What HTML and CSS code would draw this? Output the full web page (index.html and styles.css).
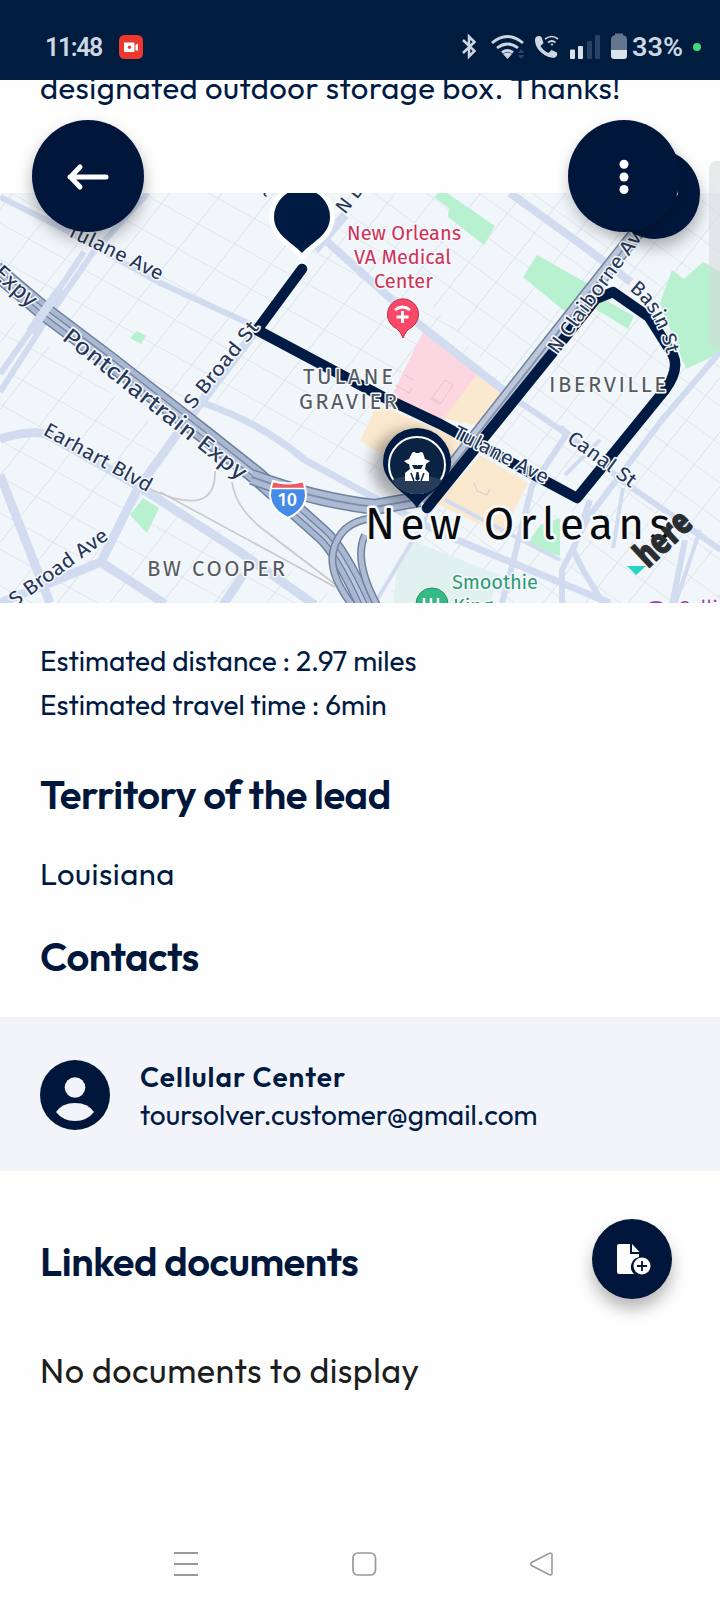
FILE: index.html
```html
<!DOCTYPE html>
<html lang="en">
<head>
<meta charset="utf-8">
<title>Lead details</title>
<link rel="stylesheet" href="styles.css">
</head>
<body>
<header class="status">
  <div class="status-left">
    <span class="clock">11:48</span>
    <svg class="rec" width="24" height="24" viewBox="0 0 24 24"><rect width="24" height="24" rx="5.5" fill="#ec382e"/><path d="M5 7.500h9.500q1 0 1 1V17H6q-1 0-1-1zM16.500 10l2.500-1.500v7.500l-2.500-1z" fill="#fff"/><circle cx="10.500" cy="12.300" r="1.700" fill="#ec382e"/></svg>
  </div>
  <svg class="status-icons" width="255" height="32" viewBox="460 30 255 32">
    <g fill="none" stroke="#cdd6e1" stroke-width="2.500">
      <path d="M463 40l11.500 11-5.500 5.500v-20l5.500 5.500L463 53"/>
      <path d="M492 43q15-13 31 0M497 48q10.500-8 21 0M502 52.500q5.500-4 11 0" stroke-width="2.800"/>
      <path d="M545 39q7-5 13 0M548 42.500q4-3 7.500 0" stroke-width="1.700"/>
    </g>
    <path d="M503 54q4.500-3 9 0l-4.500 5zM550.500 44q1.500-1 3 0l-1.500 2z" fill="#cdd6e1"/>
    <path d="M536 37q3-2 5.500 0l2 6-3 3q3 5 8 7l3-3 5.500 2.500q1 3-2 5-5 1-10.500-2.500-9-6-9.500-14-.2-3 1-4z" fill="#cdd6e1"/>
    <path d="M518 53l3-4 3.500 4zM518 55l3 4 3.500-4z" fill="#29436a"/>
    <g fill="#d6dee7"><rect x="570" y="49.500" width="5" height="9.500" rx="1"/><rect x="578" y="46" width="5" height="13" rx="1"/></g>
    <g fill="#284265"><rect x="587" y="41" width="5" height="18" rx="1"/><rect x="595" y="35" width="5" height="24" rx="1"/></g>
    <path d="M611 39q0-3 4-4v-1.500h8V35q4 1 4 4v12h-16z" fill="#64768e"/><path d="M611 50h16v6q0 3-3 3h-10q-3 0-3-3z" fill="#dae2ea"/>
    <text x="632" y="56" textLength="51" lengthAdjust="spacingAndGlyphs" class="battery">33%</text>
    <circle cx="697" cy="47" r="4" fill="#3ddc78"/>
  </svg>
</header>
<main>
  <section class="note"><p>designated outdoor storage box. Thanks!</p></section>
  <svg class="map" width="720" height="410" viewBox="0 193 720 410">
    <defs>
      <pattern id="gridA" width="42" height="32" patternUnits="userSpaceOnUse" patternTransform="matrix(.87 .48 -.62 .79 12 193)"><path d="M0 0H42M0 0V32" fill="none" stroke="#d3d8e2" stroke-width="1.200"/></pattern>
      <pattern id="gridB" width="34" height="31" patternUnits="userSpaceOnUse" patternTransform="matrix(.8 .58 -.62 .79 480 193)"><path d="M0 0H34M0 0V31" fill="none" stroke="#d3d9e3" stroke-width="1.200"/></pattern>
      <path id="basin" d="M629 290Q656 309 667 356"/>
      <filter id="soft" x="-50%" y="-50%" width="200%" height="200%"><feGaussianBlur stdDeviation="7"/></filter>
    </defs>
    <rect y="193" width="720" height="410" fill="#f1f6fa"/>
    <path d="M0 193H330L514 395 430 480 340 470 215 400 180 420 0 270z" fill="url(#gridA)"/>
    <path d="M0 310L160 430 148 488 345 603H0z" fill="url(#gridA)"/>
    <path d="M330 193H720V603H385L430 510 514 395z" fill="url(#gridB)"/>
    <g fill="#b8f1d0">
      <path d="M439 193h8l48 33-11 19-36-28 1-9-14-10z"/>
      <path d="M537 255l55 31-18 33-51-42zM603 299l31 17-6 13-32-20zM672 270l12 9 19-17 17 9v82l-34 16-26-66z"/>
      <path d="M137 331l9 5-5 8-11-6zM143 498l16 10-12 25-17-18zM540 525l20-7v38l-33-11z"/>
    </g>
    <path d="M410 540l90 35-10 28h-97l4-35z" fill="#e0f1ef"/>
    <path d="M424 330l56 41-39 54-49-30z" fill="#fcd7e1"/>
    <g fill="#fbe9cf"><path d="M480 370l31 23-26 34-41-8zM377 404l85 36-28 46-74-45zM480 455l48 28-26 52-65-31z"/></g>
    <path d="M395 385l14 8 3-5M405 375l8 5M445 380l8 5-12 18-9-5zM430 398l10 7M474 483l3 8 10 4 3-6" fill="none" stroke="#e5c3cb"/>
    <g fill="none" stroke="#d2dcf0" stroke-width="9" stroke-linejoin="round">
      <path d="M0 197L60 227 160 283 257 327" stroke-width="6"/>
      <path d="M0 392L45 322 92 254 148 193M0 374L45 310 84 252" stroke-width="6"/>
      <path d="M257 329L180 430 137 490 101 562 0 603M345 215L315 250"/>
      <path d="M0 439Q35 428 50 436L135 484 240 552 315 605M0 475L50 603M101 562l64 42M243 575l-20 30"/>
      <path d="M200 402Q260 422 305 460L360 490 440 533 530 570 610 603" stroke-width="7"/>
      <path d="M322 237L420 325 512 397M510 193l76 55 45 34" stroke-width="8"/>
      <path d="M720 352L662 420 590 515M512 397l55 37-35 52-20 80-10 37M560 427l61 53 100 70M592 510l-30 60v35M590 500l-17 50 10 20 20 33M685 540l-13 65" stroke-width="6"/>
      <path d="M435 503l-60 100M445 500l115 60M600 440l-35 35M623 488l-10 60M700 530l-25 75" stroke-width="4"/>
    </g>
    <g fill="none" stroke="#cbc9cb" stroke-width="1.700"><path d="M148 488q68 32 67-17M160 492l175 95M232 482q4 27 32 48l76 58"/></g>
    <g fill="none" stroke-linejoin="round">
      <path d="M-5 270L45 312 110 361 205 435 258 477 322 534Q340 550 365 605" stroke="#6d7d9c" stroke-width="19"/>
      <path d="M-5 270L45 312 110 361 205 435 258 477 322 534Q340 550 365 605" stroke="#a9b8d2" stroke-width="16"/>
      <path d="M-5 270L45 312 110 361 205 435 258 477 322 534Q340 550 365 605" stroke="#71819f" stroke-width="6"/>
      <path d="M-5 270L45 312 110 361 205 435 258 477 322 534Q340 550 365 605" stroke="#bac7dc" stroke-width="3.500"/>
      <path d="M252 477Q315 500 375 507L420 499" stroke="#71819f" stroke-width="16"/>
      <path d="M252 477Q315 500 375 507L420 499" stroke="#acbad3" stroke-width="13"/>
      <path d="M252 477Q315 500 375 507L420 499" stroke="#7d8ca8" stroke-width="2"/>
      <path d="M380 518Q345 518 335 545 325 570 353 606M365 535q-12 25 12 70" stroke="#71819f" stroke-width="8"/>
      <path d="M380 518Q345 518 335 545 325 570 353 606M365 535q-12 25 12 70" stroke="#aebcd3" stroke-width="5"/>
      <path d="M424 503L544 350 645 222" stroke="#71819f" stroke-width="15"/>
      <path d="M424 503L544 350 645 222" stroke="#bdc7da" stroke-width="12"/>
      <path d="M424 503L544 350 645 222" stroke="#8492ae" stroke-width="2"/>
      <path d="M30 332L60 289" stroke="#d2dcf0" stroke-width="9"/>
    </g>
    <path d="M302 269L257 330 383 397 440 424 577 498 664 391Q680 370 673 355L649 317 613 292 596 299 427 508" fill="none" stroke="#001b43" stroke-width="10.500" stroke-linejoin="round" stroke-linecap="round"/>
    <g class="road">
      <text transform="translate(66 235) rotate(26)" textLength="104" lengthAdjust="spacingAndGlyphs">Tulane Ave</text>
      <text class="hwy" transform="translate(-8 275) rotate(42)" textLength="50" lengthAdjust="spacingAndGlyphs">Expy</text>
      <text class="hwy" transform="translate(61 339) rotate(38.500)" textLength="228" lengthAdjust="spacingAndGlyphs">Pontchartrain Expy</text>
      <text transform="translate(193 410) rotate(-51)" textLength="106" lengthAdjust="spacingAndGlyphs">S Broad St</text>
      <text transform="translate(42 434) rotate(29)" textLength="121" lengthAdjust="spacingAndGlyphs">Earhart Blvd</text>
      <text transform="translate(15 607) rotate(-36)" textLength="117" lengthAdjust="spacingAndGlyphs">S Broad Ave</text>
      <text transform="translate(557 355) rotate(-54)" textLength="157" lengthAdjust="spacingAndGlyphs">N Claiborne Ave</text>
      <text><textPath href="#basin" textLength="76" lengthAdjust="spacingAndGlyphs">Basin St</textPath></text>
      <text transform="translate(566 441) rotate(36)" textLength="80" lengthAdjust="spacingAndGlyphs">Canal St</text>
      <text transform="translate(452 437) rotate(27)" textLength="104" lengthAdjust="spacingAndGlyphs">Tulane Ave</text>
      <text transform="translate(345 215) rotate(-52)">N Broad</text>
      <text transform="translate(254 184) rotate(48)">St</text>
    </g>
    <g class="area">
      <text x="303" y="384" textLength="90">TULANE</text><text x="299" y="409" textLength="98">GRAVIER</text>
      <text x="549" y="392" textLength="117">IBERVILLE</text><text x="147" y="576" textLength="138">BW COOPER</text>
    </g>
    <g class="poi" fill="#cf3158">
      <text x="347" y="240" textLength="114">New Orleans</text><text x="354" y="264" textLength="97">VA Medical</text><text x="374" y="288" textLength="59">Center</text>
    </g>
    <path d="M403 338q-3-8-9-11a15.500 15.500 0 1 1 18 0q-6 3-9 11z" fill="#fb4868" stroke="#bc2e4e"/>
    <path d="M402.500 311v12M396.500 317h12M395 310q7.500-6 15 0" stroke="#fff" stroke-width="2.800" fill="none"/>
    <g class="poi" fill="#2d9b76"><text x="452" y="589" textLength="86">Smoothie</text><text x="453" y="613">King</text></g>
    <circle cx="432" cy="604" r="16" fill="#35b985" stroke="#238d68"/><path d="M424 598v7M431 598v7M438 598v7" stroke="#fff" stroke-width="2.500"/>
    <circle cx="656" cy="615" r="14" fill="#9b46b0"/><text class="poi" x="678" y="615" fill="#9b46b0">Collins</text>
    <path d="M272 481q16 5 32 0l1 9h-34z" fill="#ed5b61"/><path d="M271 489h34q2 20-17 28-19-8-17-28z" fill="#468be8"/>
    <path d="M273 481q15 5 30 0 3 7 3 15-1 14-18 22-17-8-18-22 0-8 3-15z" fill="none" stroke="#fff" stroke-width="2"/>
    <path d="M271 488.500h34" stroke="#fff" stroke-width="1.500"/><text x="278" y="506" textLength="19" class="shield">10</text>
    <path d="M302 253C292 242 274 235 274 217a28 28 0 0 1 56 0c0 18-18 25-28 36z" fill="#001b43" stroke="#fff" stroke-width="10" paint-order="stroke"/>
    <ellipse cx="410" cy="466" rx="38" ry="36" fill="#000" opacity=".32" filter="url(#soft)"/>
    <path d="M417 508C408 493 383 484 383 462a34 34 0 0 1 68 0c0 22-25 31-34 46z" fill="#001b43"/>
    <circle cx="417" cy="465" r="28" fill="#0a2342" stroke="#fff" stroke-width="2"/>
    <path d="M392 480q25-10 50 0a29 29 0 0 1-50 0" fill="#263c59"/>
    <path d="M412 453q2-2 4 0h3q2-2 4 0l2 6 5 2-4 3h-18l-4-3 5-2zM409 464h17l-1 5 4 4v8h-24v-8l5-4z" fill="#fff"/><path d="M412 465h5l.5 1 .5-1h5l-2 4h-7z" fill="#0a2342"/><path d="M411 473l3 8M424 473l-3 8" stroke="#0a2342" stroke-width="1.500"/><path d="M416.500 472h2l1.200 7-2.200 2-2.200-2z" fill="#0a2342"/>
    <text class="city" x="365" y="539" textLength="305">New Orleans</text>
    <text class="here" transform="translate(648 569) rotate(-43)" textLength="64" lengthAdjust="spacingAndGlyphs">here</text>
    <path d="M627 566h19l-10 9z" fill="#2ad1c6"/>
  </svg>
  <section class="details">
    <p class="estimate">Estimated distance : 2.97 miles</p>
    <p class="estimate">Estimated travel time : 6min</p>
    <h2 class="h-territory">Territory of the lead</h2>
    <p class="territory">Louisiana</p>
    <h2 class="h-contacts">Contacts</h2>
  </section>
  <section class="contact">
    <svg width="70" height="70" viewBox="0 0 70 70"><circle cx="35" cy="35" r="35" fill="#00173b"/><circle cx="35" cy="27.500" r="10.300" fill="#f3f4fa"/><path d="M16 52q6-9 19-9t19 9q-7 9-19 9t-19-9z" fill="#f3f4fa"/></svg>
    <div><p class="name">Cellular Center</p><p class="email">toursolver.customer@gmail.com</p></div>
  </section>
  <section class="documents">
    <div class="doc-head"><h2 class="h-docs">Linked documents</h2>
      <button class="add" aria-label="Add document"><svg width="40" height="40" viewBox="0 0 40 40"><path d="M7 5h11v10h9v3a10 10 0 0 0-5 17H7q-2 0-2-2V7q0-2 2-2zM20 5l7.500 8H20z" fill="#fff"/><circle cx="30" cy="27" r="8.500" fill="#fff"/><path d="M30 22v10M25 27h10" stroke="#00173b" stroke-width="1.800"/></svg></button>
    </div>
    <p class="empty">No documents to display</p>
  </section>
</main>
<button class="fab edit" aria-label="Edit"><svg width="6" height="10" viewBox="0 0 6 10"><path d="M1 7L4 1v5z" fill="#ccd6e4"/></svg></button>
<button class="fab back" aria-label="Back"><svg width="44" height="32" viewBox="0 0 44 32"><path d="M40 17H4M14 7L4.500 17 14 27" fill="none" stroke="#fff" stroke-width="5" stroke-linecap="round" stroke-linejoin="round"/></svg></button>
<button class="fab more" aria-label="More"><svg width="12" height="38" viewBox="0 0 12 38"><g fill="#fff"><circle cx="6" cy="7.300" r="4.500"/><circle cx="6" cy="20" r="4.500"/><circle cx="6" cy="32.500" r="4.500"/></g></svg></button>
<div class="scrollbar"></div>
<nav class="nav">
  <svg width="24" height="26" viewBox="0 0 24 26"><path d="M0 2h24M0 13h24M0 24h24" stroke="#999" stroke-width="1.800"/></svg>
  <svg width="26" height="26" viewBox="0 0 26 26"><rect x="2" y="2" width="22.500" height="22" rx="5" fill="none" stroke="#999" stroke-width="1.700"/></svg>
  <svg width="26" height="26" viewBox="0 0 26 26"><path d="M2.500 11.500L20.500 2.300q2.500-.5 2.500 1.500v18.500q0 2-2.500 1.500L2.500 14.500q-1.500-1.500 0-3z" fill="none" stroke="#999" stroke-width="1.600"/></svg>
</nav>
</body>
</html>
```
FILE: styles.css
```css
* { box-sizing: border-box; }
body { margin: 0; width: 720px; height: 1608px; overflow: hidden; position: relative; display: flex; flex-direction: column; background: #fefefe; color: #001b43; font-family: Outfit, Lato, "Liberation Sans", sans-serif; }
p, h2 { margin: 0; white-space: nowrap; }
svg { display: block; flex: none; }
button { border: 0; padding: 0; display: flex; align-items: center; justify-content: center; background: #00173b; border-radius: 50%; }
.status { height: 80px; flex: none; background: #001d40; display: flex; justify-content: space-between; padding: 30px 5px 0 45px; position: relative; z-index: 1; }
.status-left { display: flex; height: 34px; align-items: center; gap: 17px; }
.clock { width: 57px; color: #cdd6e1; font: 600 25px Roboto, sans-serif; letter-spacing: -1.4px; }
.battery { fill: #cdd6e1; font: 600 25px Roboto, sans-serif; }
main { flex: 1; }
.note { height: 113px; padding-left: 40px; }
.note p { font-size: 31px; line-height: 40px; position: relative; top: -12px; letter-spacing: .47px; }
.map { overflow: hidden; }
.map text { font-family: "Fira Sans", "Noto Sans", sans-serif; stroke: #f5f9fc; stroke-width: 3px; paint-order: stroke; stroke-linejoin: round; }
.road text { font-size: 20px; fill: #273658; }
.map .road .hwy { font-size: 23px; }
.area text { font-size: 22px; fill: #555960; }
.map text.poi, .poi text { font-size: 20px; }
.map .shield { font-size: 18px; fill: #fff; stroke: none; font-weight: 500; }
.map .city { font-size: 44px; fill: #080b0e; stroke-width: 5px; }
.map .here { font: 800 36px "Open Sans", sans-serif; fill: #292c31; stroke: #292c31; stroke-width: 1px; }
.details { padding: 36px 40px 0; height: 414px; }
.estimate { font-size: 28px; line-height: 44px; }
h2 { font-size: 40px; line-height: 50px; font-weight: 600; letter-spacing: -.5px; color: #00173b; }
.h-territory { margin-top: 42px; }
.territory { font-size: 31px; line-height: 40px; margin-top: 35px; letter-spacing: .5px; }
.h-contacts { margin-top: 37px; }
.contact { height: 154px; background: #f3f4fa; display: flex; align-items: center; padding: 2px 40px 0; gap: 30px; }
.name, .email { font-size: 28px; line-height: 38px; position: relative; top: 1px; }
.name { font-weight: 600; letter-spacing: 1px; }
.documents { padding: 48px 48px 0 40px; }
.doc-head { display: flex; height: 80px; align-items: center; justify-content: space-between; }
.h-docs { padding-top: 3px; }
.add { width: 80px; height: 80px; box-shadow: 0 10px 16px rgba(0,0,0,.28); }
.empty { color: #1d1e20; font-size: 34px; line-height: 44px; margin-top: 50px; letter-spacing: .5px; }
.fab { position: absolute; box-shadow: 0 8px 16px rgba(0,0,0,.3); }
.back, .more { top: 120px; width: 112px; height: 112px; }
.back { left: 32px; }
.more { left: 568px; box-shadow: 0 6px 14px rgba(0,0,0,.22); }
.edit { top: 149px; left: 610px; width: 90px; height: 90px; padding-left: 44px; }
.scrollbar { position: absolute; right: 0; top: 161px; width: 11px; height: 187px; border-radius: 8px 0 0 8px; background: rgba(214,217,220,.55); }
.nav { height: 86px; flex: none; display: flex; justify-content: space-between; padding: 29px 165px 0 174px; }
```
